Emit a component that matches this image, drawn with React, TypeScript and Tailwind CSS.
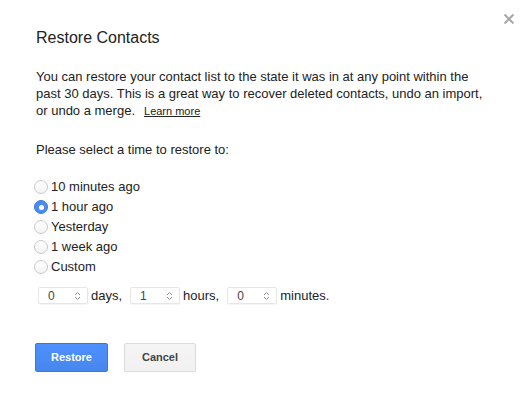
import React from "react";

function Radio({ checked }: { checked?: boolean }) {
  return checked ? (
    <span className="flex h-[14px] w-[14px] shrink-0 items-center justify-center rounded-full border border-[#3b7ae0] bg-[#4a8cf0]">
      <span className="h-[5px] w-[5px] rounded-full bg-white" />
    </span>
  ) : (
    <span className="h-[14px] w-[14px] shrink-0 rounded-full border border-[#c9c9c9] bg-gradient-to-b from-white to-[#f3f3f3]" />
  );
}

function Spinner() {
  return (
    <svg width="7" height="10" viewBox="0 0 7 10" fill="none" stroke="#8a8a8a" strokeWidth="1">
      <path d="M1 4 L3.5 1.5 L6 4" />
      <path d="M1 6 L3.5 8.5 L6 6" />
    </svg>
  );
}

function NumBox({ value }: { value: string }) {
  return (
    <div className="flex h-[17px] w-[50px] items-center justify-between rounded-[2px] border border-[#e6e6e6] bg-white pl-[9px] pr-[6px] text-[12px] text-[#444] shadow-[0_1px_1px_rgba(0,0,0,0.04)]">
      <span>{value}</span>
      <Spinner />
    </div>
  );
}

export default function App() {
  const options = ["10 minutes ago", "1 hour ago", "Yesterday", "1 week ago", "Custom"];
  return (
    <div
      className="relative h-[398px] w-[526px] overflow-hidden bg-white text-[#222]"
      style={{ fontFamily: '"Liberation Sans", Arial, sans-serif' }}
    >
      <div className="absolute left-[503px] top-[13px]">
        <svg width="12" height="12" viewBox="0 0 12 12" stroke="#a8a8a8" strokeWidth="2">
          <path d="M1.5 1.5 L10.5 10.5 M10.5 1.5 L1.5 10.5" />
        </svg>
      </div>

      <div className="flex flex-col pl-[36px] pt-[28px]">
        <h1 className="text-[16px] leading-[20px]">Restore Contacts</h1>

        <p className="mt-[20px] w-[480px] whitespace-nowrap text-[13px] leading-[17px]">
          You can restore your contact list to the state it was in at any point within the
          <br />
          past 30 days. This is a great way to recover deleted contacts, undo an import,
          <br />
          or undo a merge.
          <a className="ml-[9px] text-[11px] text-[#222] underline">Learn more</a>
        </p>

        <p className="mt-[21px] text-[13px] leading-[17px]">Please select a time to restore to:</p>

        <div className="mt-[19px] flex flex-col">
          {options.map((o, i) => (
            <div key={o} className="-ml-[2px] flex h-[20px] items-center gap-[3px] text-[13px]">
              <Radio checked={i === 1} />
              <span>{o}</span>
            </div>
          ))}
        </div>

        <div className="ml-[2px] mt-[10px] flex h-[17px] items-center text-[13px]">
          <NumBox value="0" />
          <span className="ml-[3px] mr-[8px]">days,</span>
          <NumBox value="1" />
          <span className="ml-[3px] mr-[8px]">hours,</span>
          <NumBox value="0" />
          <span className="ml-[3px]">minutes.</span>
        </div>

        <div className="-ml-[1px] mt-[39px] flex gap-[16px]">
          <button className="h-[29px] w-[73px] rounded-[2px] border border-[#3079ed] bg-gradient-to-b from-[#4d90fe] to-[#4787ed] text-[11px] font-bold text-white">
            Restore
          </button>
          <button className="h-[29px] w-[72px] rounded-[2px] border border-[#dcdcdc] bg-gradient-to-b from-[#f5f5f5] to-[#f1f1f1] text-[11px] font-bold text-[#444]">
            Cancel
          </button>
        </div>
      </div>
    </div>
  );
}
